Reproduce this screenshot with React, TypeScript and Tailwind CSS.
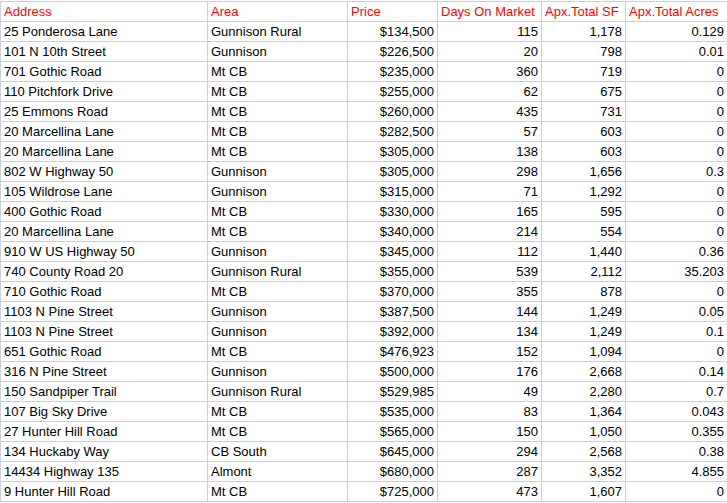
const rows: string[][] = [
  ["25 Ponderosa Lane", "Gunnison Rural", "$134,500", "115", "1,178", "0.129"],
  ["101 N 10th Street", "Gunnison", "$226,500", "20", "798", "0.01"],
  ["701 Gothic Road", "Mt CB", "$235,000", "360", "719", "0"],
  ["110 Pitchfork Drive", "Mt CB", "$255,000", "62", "675", "0"],
  ["25 Emmons Road", "Mt CB", "$260,000", "435", "731", "0"],
  ["20 Marcellina Lane", "Mt CB", "$282,500", "57", "603", "0"],
  ["20 Marcellina Lane", "Mt CB", "$305,000", "138", "603", "0"],
  ["802 W Highway 50", "Gunnison", "$305,000", "298", "1,656", "0.3"],
  ["105 Wildrose Lane", "Gunnison", "$315,000", "71", "1,292", "0"],
  ["400 Gothic Road", "Mt CB", "$330,000", "165", "595", "0"],
  ["20 Marcellina Lane", "Mt CB", "$340,000", "214", "554", "0"],
  ["910 W US Highway 50", "Gunnison", "$345,000", "112", "1,440", "0.36"],
  ["740 County Road 20", "Gunnison Rural", "$355,000", "539", "2,112", "35.203"],
  ["710 Gothic Road", "Mt CB", "$370,000", "355", "878", "0"],
  ["1103 N Pine Street", "Gunnison", "$387,500", "144", "1,249", "0.05"],
  ["1103 N Pine Street", "Gunnison", "$392,000", "134", "1,249", "0.1"],
  ["651 Gothic Road", "Mt CB", "$476,923", "152", "1,094", "0"],
  ["316 N Pine Street", "Gunnison", "$500,000", "176", "2,668", "0.14"],
  ["150 Sandpiper Trail", "Gunnison Rural", "$529,985", "49", "2,280", "0.7"],
  ["107 Big Sky Drive", "Mt CB", "$535,000", "83", "1,364", "0.043"],
  ["27 Hunter Hill Road", "Mt CB", "$565,000", "150", "1,050", "0.355"],
  ["134 Huckaby Way", "CB South", "$645,000", "294", "2,568", "0.38"],
  ["14434 Highway 135", "Almont", "$680,000", "287", "3,352", "4.855"],
  ["9 Hunter Hill Road", "Mt CB", "$725,000", "473", "1,607", "0"],
];

const headers = ["Address", "Area", "Price", "Days On Market", "Apx.Total SF", "Apx.Total Acres"];

export default function App() {
  return (
    <div className="h-[503px] w-[727px] overflow-hidden bg-white pt-px" style={{ fontFamily: '"Liberation Sans", Arial, sans-serif' }}>
      <table className="w-[727px] table-fixed border-collapse text-[13px] leading-none text-black">
        <colgroup>
          <col className="w-[207px]" />
          <col className="w-[140px]" />
          <col className="w-[90px]" />
          <col className="w-[104px]" />
          <col className="w-[84px]" />
          <col className="w-[102px]" />
        </colgroup>
        <thead>
          <tr className="h-5">
            {headers.map((h) => (
              <th key={h} className="border border-[#c6d0de] px-[3px] text-left font-normal text-[#ff0000] whitespace-nowrap">
                {h}
              </th>
            ))}
          </tr>
        </thead>
        <tbody>
          {rows.map((r, i) => (
            <tr key={i} className="h-5">
              {r.map((c, j) => (
                <td key={j} className={`border border-[#c6d0de] px-[3px] whitespace-nowrap ${j < 2 ? "text-left" : "text-right"}`}>
                  {c}
                </td>
              ))}
            </tr>
          ))}
        </tbody>
      </table>
    </div>
  );
}
